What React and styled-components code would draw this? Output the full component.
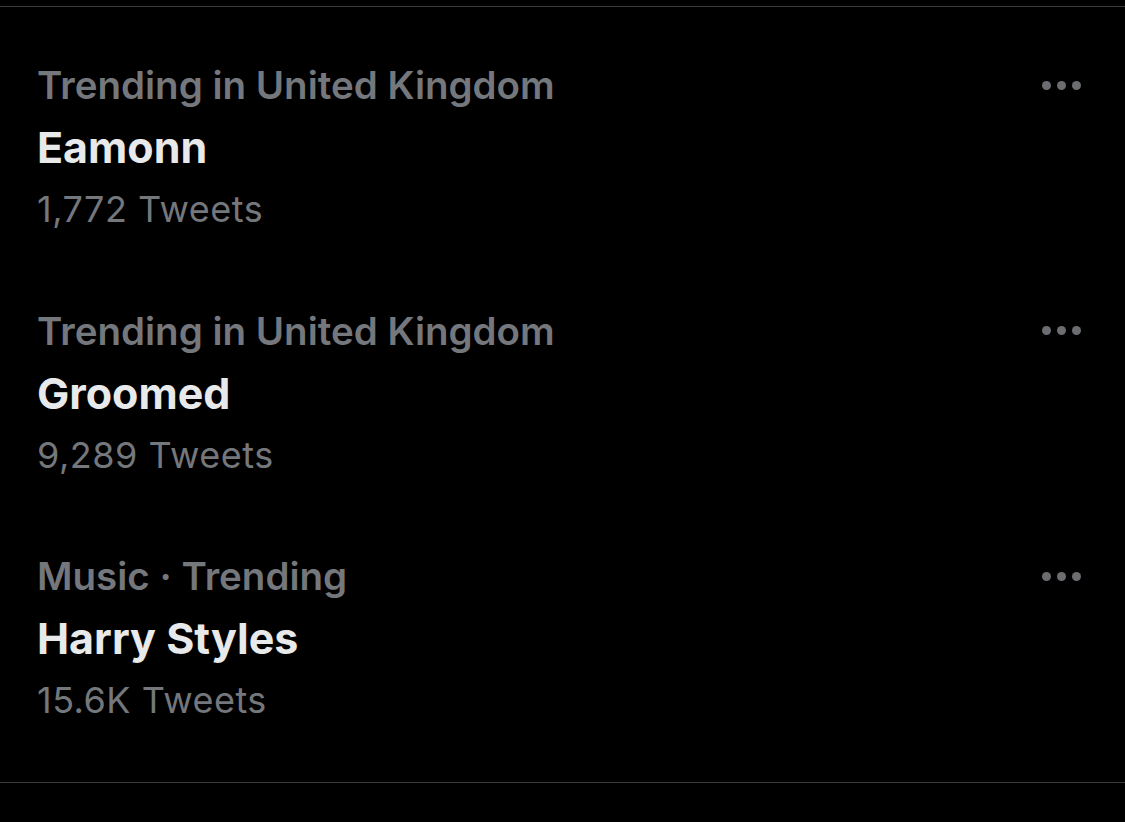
import React from "react";
import styled, { createGlobalStyle } from "styled-components";

const GlobalStyle = createGlobalStyle`
  html, body {
    margin: 0;
    padding: 0;
    background: #000;
  }
  body {
    font-family: Inter, "Noto Sans", "Liberation Sans", sans-serif;
    -webkit-font-smoothing: antialiased;
  }
`;

const trends = [
  { category: "Trending in United Kingdom", name: "Eamonn", count: "1,772 Tweets" },
  { category: "Trending in United Kingdom", name: "Groomed", count: "9,289 Tweets" },
  { category: "Music · Trending", name: "Harry Styles", count: "15.6K Tweets" },
];

const App = () => {
  return (
    <Page>
      <GlobalStyle />
      <List>
        {trends.map((trend, i) => (
          <Row key={i}>
            <Info>
              <Category>{trend.category}</Category>
              <Name>{trend.name}</Name>
              <Count>{trend.count}</Count>
            </Info>
            <More aria-label="More">
              <Dot />
              <Dot />
              <Dot />
            </More>
          </Row>
        ))}
      </List>
    </Page>
  );
};

const Page = styled.div`
  width: 1125px;
  height: 822px;
  background: #000;
  padding-top: 6px;
  box-sizing: border-box;
  overflow: hidden;
`;

const List = styled.ul`
  list-style: none;
  margin: 0;
  padding: 47px 0 51px;
  border-top: 1px solid #3a3b3d;
  border-bottom: 1px solid #3a3b3d;
  display: flex;
  flex-direction: column;
  gap: 59.5px;
`;

const Row = styled.li`
  display: flex;
  justify-content: space-between;
  align-items: flex-start;
  padding: 0 44px 0 37px;
`;

const Info = styled.div`
  display: flex;
  flex-direction: column;
`;

const Category = styled.span`
  font-size: 38.5px;
  font-weight: 600;
  line-height: 62px;
  color: #74777b;
`;

const Name = styled.span`
  font-size: 43px;
  font-weight: 700;
  line-height: 62px;
  color: #e7e9ea;
`;

const Count = styled.span`
  font-size: 36px;
  font-weight: 400;
  line-height: 62px;
  color: #74777b;
  letter-spacing: 0.5px;
`;

const More = styled.div`
  height: 62px;
  display: flex;
  align-items: center;
  gap: 6px;
`;

const Dot = styled.span`
  width: 9px;
  height: 9px;
  border-radius: 50%;
  background: #6b6d70;
`;

export default App;
